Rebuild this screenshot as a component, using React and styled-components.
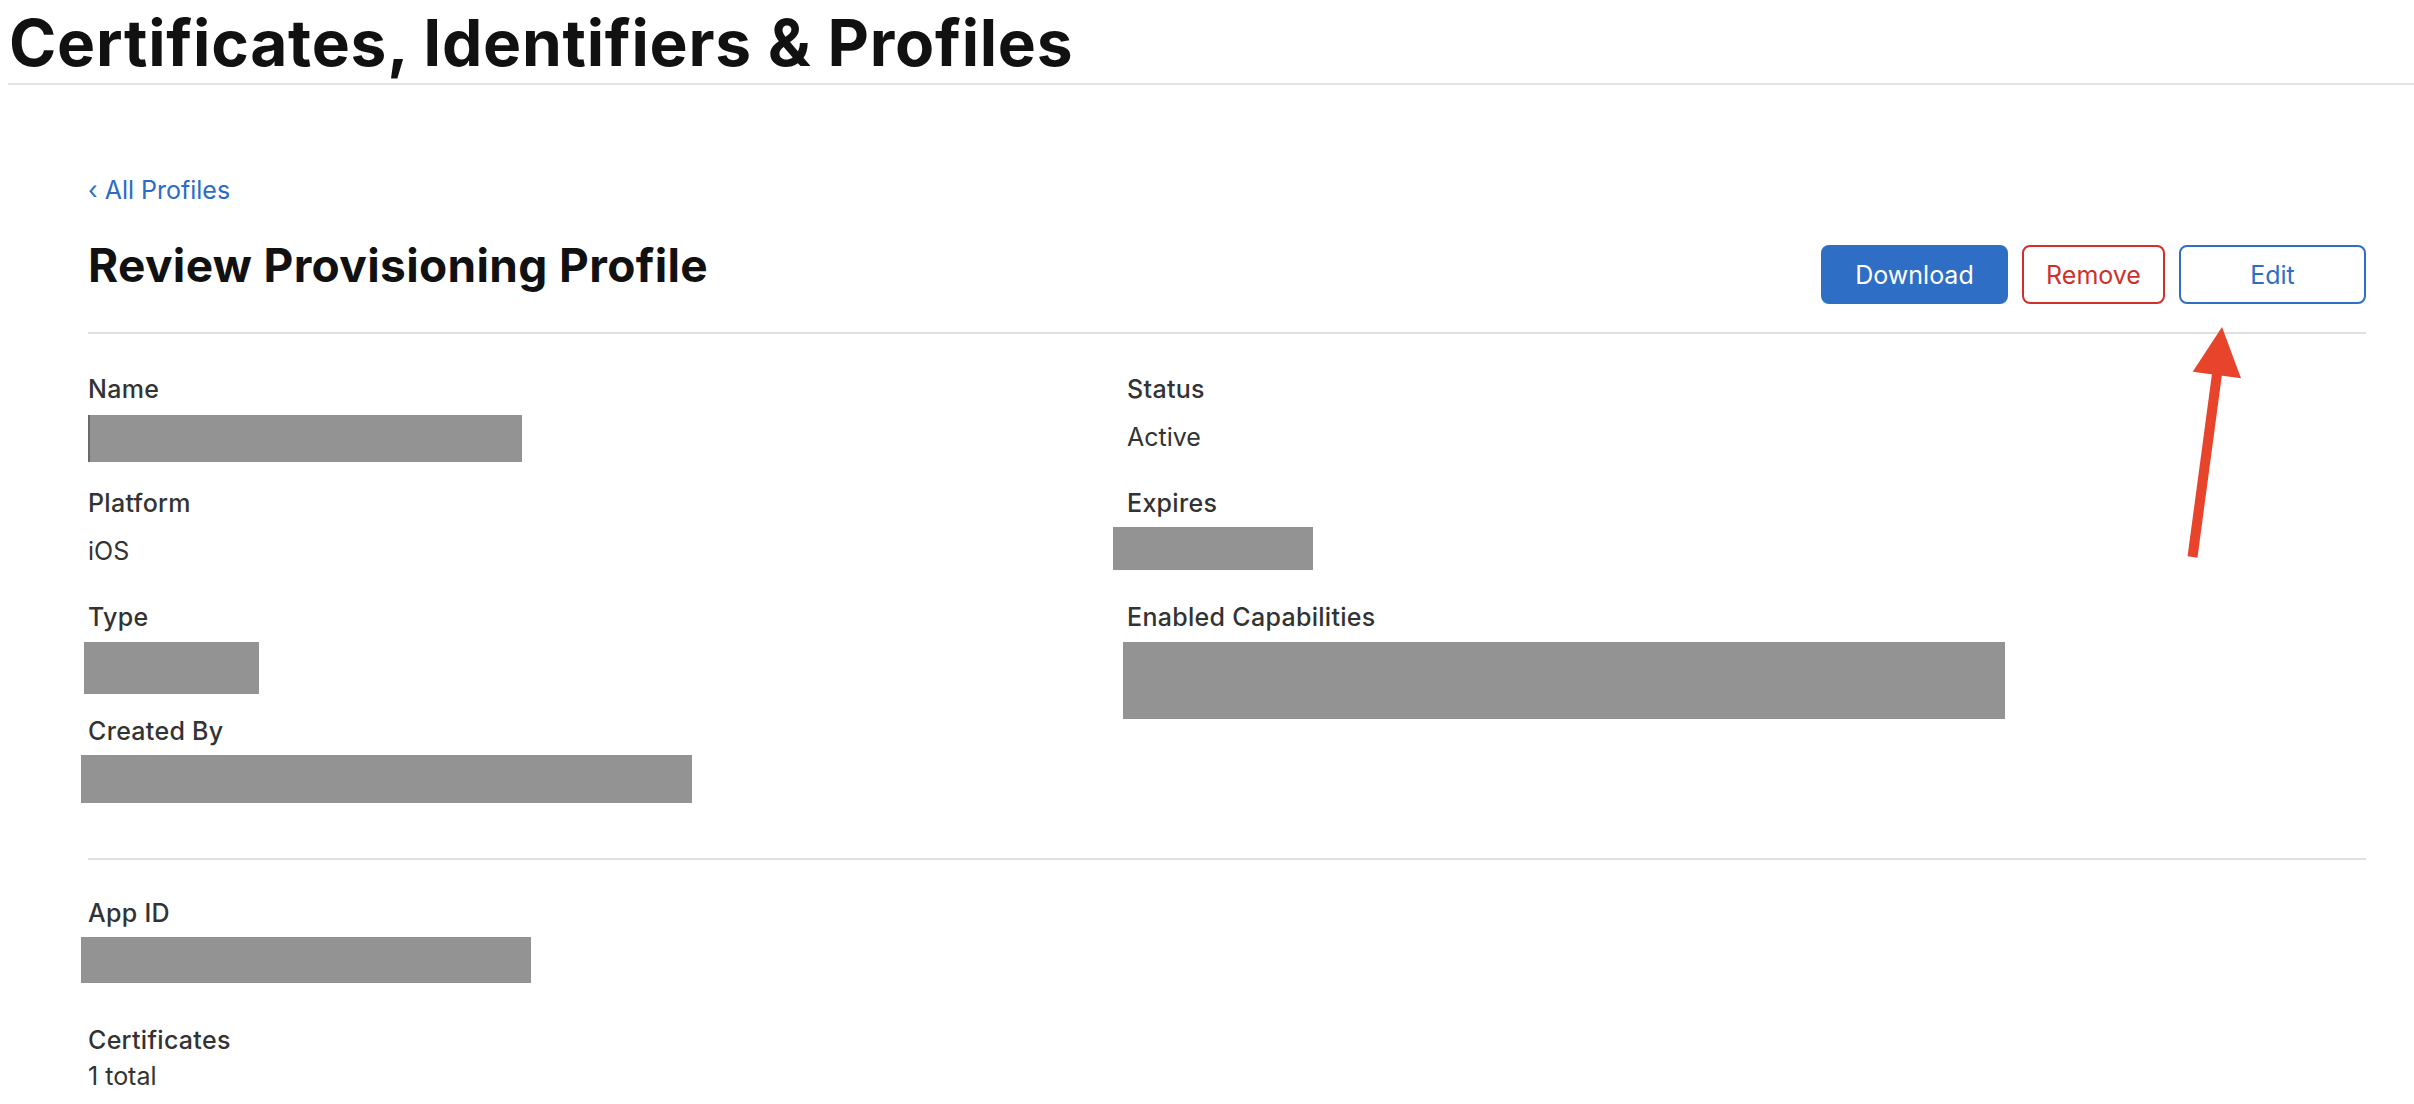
import React from "react";
import styled, { createGlobalStyle } from "styled-components";

const GlobalStyle = createGlobalStyle`
  body {
    margin: 0;
    background: #fff;
    font-family: "Inter", "Liberation Sans", sans-serif;
    color: #333;
  }
`;

const App = () => {
  return (
    <Page>
      <GlobalStyle />
      <TopBar>
        <PageTitle>Certificates, Identifiers &amp; Profiles</PageTitle>
      </TopBar>

      <Main>
        <BackLink href='#'>‹ All Profiles</BackLink>

        <TitleRow>
          <h2>Review Provisioning Profile</h2>
          <Actions>
            <Button $variant='primary' $width={187}>
              Download
            </Button>
            <Button $variant='danger' $width={143}>
              Remove
            </Button>
            <Button $variant='outline' $width={187}>
              Edit
            </Button>
          </Actions>
        </TitleRow>

        <DetailGrid>
          <Column>
            <Field>
              <Label>Name</Label>
              <Value>
                <Redacted $w={432} $h={47} $x={2} $y={-7} $peek />
              </Value>
            </Field>
            <Field>
              <Label>Platform</Label>
              <Value>iOS</Value>
            </Field>
            <Field>
              <Label>Type</Label>
              <Value>
                <Redacted $w={175} $h={52} $x={-4} $y={-8} />
              </Value>
            </Field>
            <Field>
              <Label>Created By</Label>
              <Value>
                <Redacted $w={611} $h={48} $x={-7} $y={-9} />
              </Value>
            </Field>
          </Column>
          <Column>
            <Field>
              <Label>Status</Label>
              <Value>Active</Value>
            </Field>
            <Field>
              <Label>Expires</Label>
              <Value>
                <Redacted $w={200} $h={43} $x={-14} $y={-9} />
              </Value>
            </Field>
            <Field>
              <Label>Enabled Capabilities</Label>
              <Value>
                <Redacted $w={882} $h={77} $x={-4} $y={-8} />
              </Value>
            </Field>
          </Column>
        </DetailGrid>

        <Section>
          <Field $space={49}>
            <Label>App ID</Label>
            <Value>
              <Redacted $w={450} $h={46} $x={-7} $y={-9} />
            </Value>
          </Field>
          <Field $tight>
            <Label>Certificates</Label>
            <Value>1 total</Value>
          </Field>
        </Section>
      </Main>

      {/* annotation arrow pointing at Edit */}
      <Arrow width='70' height='245' viewBox='0 0 70 245'>
        <polygon points='42,7 12.7,51.7 61,58.3' fill='#e8432b' />
        <line
          x1='37'
          y1='54'
          x2='12.5'
          y2='237'
          stroke='#e8432b'
          strokeWidth='10'
        />
      </Arrow>
    </Page>
  );
};

const Page = styled.div`
  position: relative;
  min-height: 1104px;
`;

const TopBar = styled.header`
  margin-left: 8px;
  padding: 11px 0 8px 1px;
  border-bottom: 2px solid #e3e3e3;
`;

const PageTitle = styled.h1`
  margin: 0;
  font-size: 64px;
  line-height: 64px;
  font-weight: 700;
  color: #111;
  letter-spacing: 0.75px;
`;

const Main = styled.main`
  padding: 89px 48px 0 88px;
`;

const BackLink = styled.a`
  display: block;
  font-size: 25px;
  line-height: 32px;
  color: #2b6cc4;
  text-decoration: none;
`;

const TitleRow = styled.div`
  display: flex;
  justify-content: space-between;
  align-items: flex-start;
  margin-top: 31px;
  padding-bottom: 28px;
  border-bottom: 2px solid #e0e0e0;
  h2 {
    margin: 0;
    font-size: 46px;
    line-height: 56px;
    font-weight: 700;
    color: #111;
    letter-spacing: 0.35px;
  }
`;

const Actions = styled.div`
  display: flex;
  gap: 14px;
  margin-top: 8px;
`;

const buttonColors = {
  primary: { bg: "#2e6ec5", border: "#2e6ec5", text: "#fff" },
  danger: { bg: "#fff", border: "#d0302b", text: "#d0302b" },
  outline: { bg: "#fff", border: "#2e6ec5", text: "#2e6ec5" },
};

const Button = styled.button`
  width: ${(p) => p.$width}px;
  height: 59px;
  box-sizing: border-box;
  border-radius: 8px;
  border: 2px solid ${(p) => buttonColors[p.$variant].border};
  background: ${(p) => buttonColors[p.$variant].bg};
  color: ${(p) => buttonColors[p.$variant].text};
  font-family: "Inter", "Liberation Sans", sans-serif;
  font-size: 25px;
  cursor: pointer;
`;

const DetailGrid = styled.div`
  display: grid;
  grid-template-columns: 1039px 1fr;
  padding: 40px 0 28px;
  border-bottom: 2px solid #e0e0e0;
`;

const Column = styled.div`
  display: flex;
  flex-direction: column;
`;

const Section = styled.div`
  padding-top: 38px;
`;

const Field = styled.div`
  display: flex;
  flex-direction: column;
  gap: ${(p) => (p.$tight ? 6 : 18)}px;
  margin-bottom: ${(p) => p.$space ?? 36}px;
`;

const Label = styled.div`
  font-size: 25px;
  line-height: 30px;
  font-weight: 500;
  letter-spacing: 0.3px;
  color: #333;
`;

const Value = styled.div`
  height: 30px;
  font-size: 25px;
  line-height: 30px;
  color: #333;
`;

const Redacted = styled.div`
  width: ${(p) => p.$w}px;
  height: ${(p) => p.$h}px;
  margin: ${(p) => p.$y}px 0 0 ${(p) => p.$x}px;
  background: #939393;
  box-shadow: ${(p) => (p.$peek ? "-2px 0 0 0 #6a6a6a" : "none")};
`;

const Arrow = styled.svg`
  position: absolute;
  left: 2180px;
  top: 320px;
`;

export default App;
